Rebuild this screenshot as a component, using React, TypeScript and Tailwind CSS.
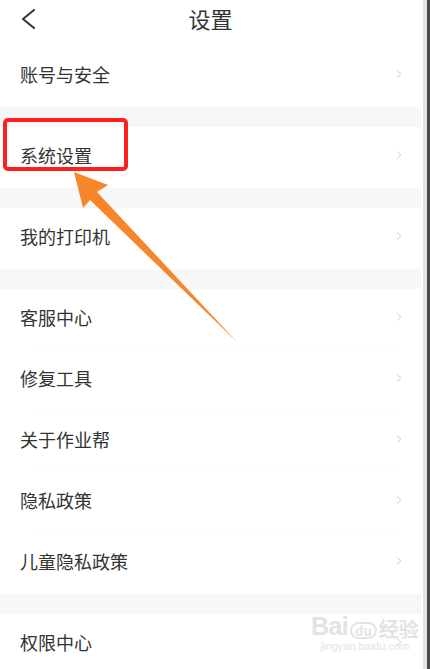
import { ChevronRight } from "lucide-react";

type Row = { label: string };

const groups: Row[][] = [
  [{ label: "账号与安全" }],
  [{ label: "系统设置" }],
  [{ label: "我的打印机" }],
  [
    { label: "客服中心" },
    { label: "修复工具" },
    { label: "关于作业帮" },
    { label: "隐私政策" },
    { label: "儿童隐私政策" },
  ],
  [{ label: "权限中心" }],
];

function SettingRow({ row, last }: { row: Row; last: boolean }) {
  return (
    <div className="relative flex h-[61px] items-center justify-between bg-white pb-[5px] pl-5 pr-[15px]">
      <span className="text-[18px] leading-none text-[#333]">{row.label}</span>
      <ChevronRight className="h-[14px] w-[14px] text-[#c9c9c9]" strokeWidth={1.6} />
      {!last && <div className="absolute bottom-0 left-[38px] right-[20px] h-px bg-[#fafafa]" />}
    </div>
  );
}

export default function App() {
  return (
    <div
      className="relative flex h-[669px] w-[430px] overflow-hidden bg-white"
      style={{ fontFamily: '"Noto Sans CJK SC", "Noto Sans", sans-serif' }}
    >
      <div className="w-[421px] shrink-0">
        {/* header */}
        <div className="relative flex h-[46px] items-center justify-center bg-white">
          <svg className="absolute left-[20px] top-[9px]" width="16" height="20" viewBox="0 0 16 20">
            <polyline points="14,1 3,10 14,19" fill="none" stroke="#333" strokeWidth="2" strokeLinecap="round" strokeLinejoin="round" />
          </svg>
          <span className="-mt-[10px] text-[22px] leading-none text-[#333]">设置</span>
        </div>

        {groups.map((g, gi) => (
          <div key={gi}>
            {gi > 0 && <div className="h-[20px] bg-[#f6f7f8]" />}
            {g.map((row, ri) => (
              <SettingRow key={row.label} row={row} last={ri === g.length - 1} />
            ))}
          </div>
        ))}
      </div>

      {/* window edge */}
      <div className="w-[2px] shrink-0 bg-white" />
      <div className="w-[4px] shrink-0 bg-[#e4e4e4]" />
      <div className="w-[3px] shrink-0 bg-[#4a4a4a]" />

      {/* red highlight box */}
      <div className="absolute left-[3px] top-[118px] h-[53px] w-[125px] rounded-[5px] border-[4px] border-[#ff1f1f]" />

      {/* orange arrow */}
      <svg className="absolute left-0 top-0" width="430" height="669" viewBox="0 0 430 669">
        <polygon points="74,172 108,185 97,192 237,342 90,200 83,208" fill="#f7862b" />
      </svg>

      {/* watermark */}
      <div className="absolute left-[311px] top-[614px] flex flex-col items-center text-[#e3e3e3]">
        <div className="flex items-end leading-none">
          <span className="text-[25px] font-bold tracking-tight" style={{ fontFamily: '"Liberation Sans", sans-serif' }}>
            Bai
          </span>
          <span className="mx-[2px] rounded-full border-2 border-[#e3e3e3] px-[3px] text-[13px] font-bold">du</span>
          <span className="text-[20px] font-bold">经验</span>
        </div>
        <span className="mt-[2px] text-[11px] leading-none" style={{ fontFamily: '"Liberation Sans", sans-serif' }}>
          jingyan.baidu.com
        </span>
      </div>
    </div>
  );
}
